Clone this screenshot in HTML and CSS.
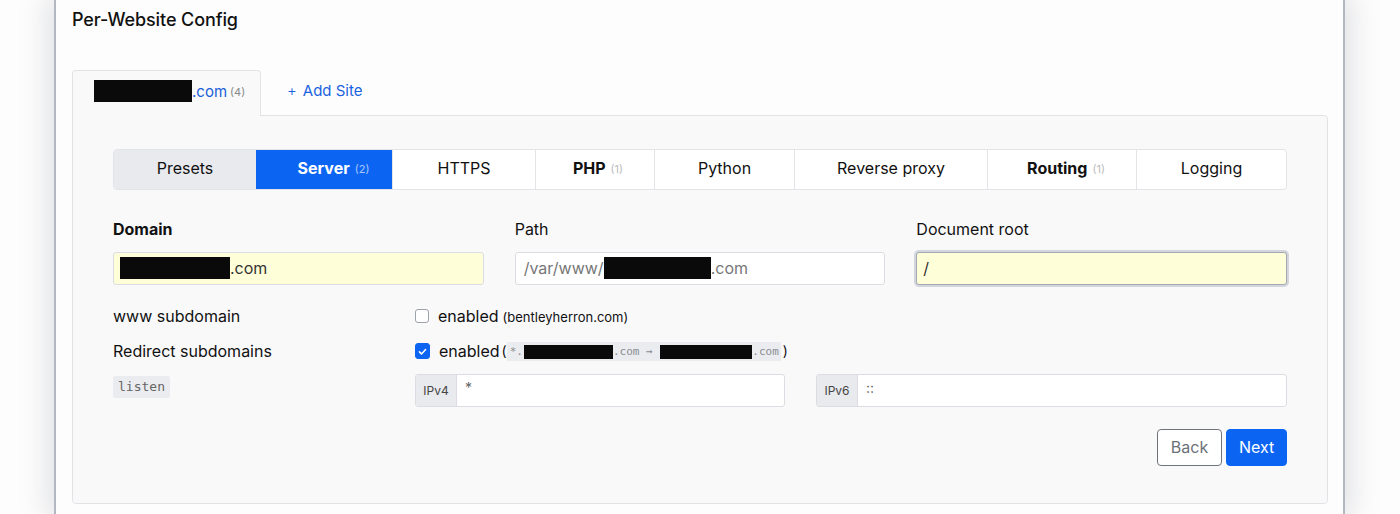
FILE: index.html
```html
<!DOCTYPE html>
<html>
<head>
<meta charset="utf-8">
<link rel="stylesheet" href="styles.css">
</head>
<body>
<div class="window">
  <h1 class="title">Per-Website Config</h1>
  <div class="site-tabs">
    <div class="site-tab active"><span class="redact r-tab"></span><span class="tab-dom">.com</span><span class="tab-count">(4)</span></div>
    <div class="site-tab add"><span class="plus">+</span> Add Site</div>
  </div>
  <div class="panel">
    <div class="seg">
      <div class="seg-item presets w-presets">Presets</div>
      <div class="seg-item current w-server"><b>Server</b><span class="cnt">(2)</span></div>
      <div class="seg-item w-https">HTTPS</div>
      <div class="seg-item w-php"><b>PHP</b><span class="cnt">(1)</span></div>
      <div class="seg-item w-python">Python</div>
      <div class="seg-item w-proxy">Reverse proxy</div>
      <div class="seg-item w-routing"><b>Routing</b><span class="cnt">(1)</span></div>
      <div class="seg-item w-logging">Logging</div>
    </div>

    <div class="fields">
      <div class="field">
        <div class="label bold">Domain</div>
        <div class="input yellow"><span class="redact r-dom"></span>.com</div>
      </div>
      <div class="field">
        <div class="label">Path</div>
        <div class="input muted">/var/www/<span class="redact r-path"></span>.com</div>
      </div>
      <div class="field">
        <div class="label">Document root</div>
        <div class="input yellow focus">/</div>
      </div>
    </div>

    <div class="opts">
      <div class="opt-label">www subdomain</div>
      <div class="opt-val"><span class="check"></span><span class="en">enabled</span><span class="note">(bentleyherron.com)</span></div>

      <div class="opt-label">Redirect subdomains</div>
      <div class="opt-val"><span class="check on"><svg viewBox="0 0 16 16" width="11" height="11"><path d="M3.5 8.5l3 3 6-6.5" fill="none" stroke="#fff" stroke-width="2.2" stroke-linecap="round" stroke-linejoin="round"/></svg></span><span class="en">enabled</span><span class="paren">(</span><code class="redir">*.<span class="redact r-c1"></span>.com → <span class="redact r-c2"></span>.com</code><span class="paren">)</span></div>

      <div class="opt-label listen-cell"><code class="listen">listen</code></div>
      <div class="opt-val ips">
        <div class="igroup v4"><span class="prefix">IPv4</span><span class="ival">*</span></div>
        <div class="igroup v6"><span class="prefix">IPv6</span><span class="ival">::</span></div>
      </div>
    </div>

    <div class="actions">
      <button class="btn back">Back</button>
      <button class="btn next">Next</button>
    </div>
  </div>
</div>
</body>
</html>
```

FILE: styles.css
```css
html, body {
  margin: 0;
  padding: 0;
  background: #fdfdfd;
  overflow: hidden;
  height: 514px;
}
body {
  font-family: Inter, "Open Sans", "Liberation Sans", sans-serif;
  color: #111;
}
.window {
  margin-left: 54px;
  height: 514px;
  box-sizing: content-box;
  border-left: 2px solid #b3b7bf;
  border-right: 2px solid #b3b7bf;
  background: #fdfdfd;
  box-shadow: 0 0 28px 6px rgba(120, 125, 135, 0.22);
  padding: 0 15px 0 16px;
  width: 1256px;
}
.title {
  margin: 0;
  padding-top: 8px;
  font-size: 18px;
  line-height: 24px;
  font-weight: 500;
  letter-spacing: -0.1px;
  color: #111;
}
.site-tabs {
  display: flex;
  margin-top: 38px;
  height: 45px;
  position: relative;
  z-index: 1;
}
.site-tab {
  display: flex;
  align-items: center;
  box-sizing: border-box;
  height: 46px;
  padding: 0 21px 5px 21px;
  font-size: 14px;
}
.site-tab.active {
  width: 189px;
  border: 1px solid #e2e3e7;
  border-bottom: none;
  border-radius: 4px 4px 0 0;
  background: #f9f9fa;
}
.redact {
  display: inline-block;
  background: #0a0a0a;
  vertical-align: middle;
  flex: none;
}
.r-tab { width: 98px; height: 22px; }
.tab-dom { color: #1a5fd8; font-size: 15px; }
.tab-count { color: #888; font-size: 11px; margin-left: 3px; margin-top: 2px; }
.site-tab.add {
  color: #1a63e0;
  font-size: 15px;
  padding-left: 26px;
}
.plus { margin-right: 6px; font-weight: 300; }
.panel {
  border: 1px solid #e2e3e7;
  border-radius: 0 4px 4px 4px;
  background: #f9f9fa;
  padding: 33px 40px 37px 40px;
}
.seg {
  display: flex;
  height: 41px;
  box-sizing: border-box;
  border: 1px solid #e3e4e8;
  border-radius: 4px;
  overflow: hidden;
  background: #fff;
}
.seg-item {
  flex: 0 0 auto;
  box-sizing: border-box;
  display: flex;
  align-items: center;
  justify-content: center;
  padding-bottom: 3px;
  font-size: 16px;
  border-left: 1px solid #e3e4e8;
  white-space: nowrap;
}
.w-presets { width: 142px; border-left: none; }
.w-server { width: 136px; padding-left: 18px; }
.w-https { width: 143px; }
.w-php { width: 119px; padding-left: 6px; }
.w-python { width: 140px; }
.w-proxy { width: 193px; }
.w-routing { width: 149px; padding-left: 8px; }
.w-logging { flex: 1 1 auto; }
.seg-item b { font-weight: 700; }
.seg-item .cnt {
  font-size: 11px;
  color: #bbb;
  margin-left: 5px;
  margin-top: 2px;
}
.seg-item.presets { background: #e9eaee; }
.seg-item.current {
  background: #0b65f2;
  color: #fff;
  border-left-color: #0b65f2;
}
.seg-item.current .cnt { color: rgba(255,255,255,0.65); }
.fields {
  display: grid;
  grid-template-columns: 1fr 1fr 1fr;
  column-gap: 31px;
  margin-top: 29px;
}
.label {
  font-size: 16px;
  line-height: 20px;
  margin-bottom: 13px;
}
.label.bold { font-weight: 700; }
.input {
  height: 33px;
  box-sizing: border-box;
  border: 1px solid #dcdde2;
  border-radius: 3px;
  background: #fff;
  display: flex;
  align-items: center;
  padding: 0 7px 1px 6px;
  font-size: 16px;
  color: #333;
}
.input.yellow { background: #fefed9; }
.input.muted { color: #777; padding-left: 8px; }
.input.focus {
  border-color: #a3a8b2;
  box-shadow: 0 0 0 2px #d3d6dc;
}
.r-dom { width: 110px; height: 22px; }
.r-path { width: 107px; height: 22px; }
.opts {
  display: grid;
  grid-template-columns: 302px 1fr;
  margin-top: 19px;
  row-gap: 11px;
}
.opt-label {
  font-size: 16px;
  line-height: 24px;
  display: flex;
  align-items: center;
}
.opt-val {
  display: flex;
  align-items: center;
  font-size: 16px;
  line-height: 24px;
  height: 24px;
}
.check {
  width: 14px;
  height: 14px;
  box-sizing: border-box;
  border: 1px solid #9ea3ab;
  border-radius: 3px;
  background: #fff;
  margin-right: 9px;
  display: inline-flex;
  align-items: center;
  justify-content: center;
}
.check.on {
  background: #0b65f2;
  border-color: #0b65f2;
  width: 15px;
  height: 16px;
}
.en { color: #111; }
.note { font-size: 13px; margin-left: 4px; margin-top: 2px; }
.paren { font-size: 14px; margin-left: 2px; }
code {
  font-family: "DejaVu Sans Mono", "Liberation Mono", monospace;
}
.redir {
  display: inline-flex;
  align-items: center;
  background: #ebecef;
  color: #8a8d93;
  font-size: 11px;
  padding: 0 2px 0 3px;
  height: 19px;
  margin-top: 1px;
  white-space: pre;
}
.r-c1 { width: 89px; height: 14px; margin: 0 0 0 1px; }
.r-c2 { width: 92px; height: 14px; margin: 0 0 0 1px; }
.listen-cell { align-items: flex-start; height: 33px; padding-top: 2px; box-sizing: border-box; }
.listen {
  background: #ebecef;
  color: #666;
  font-size: 13px;
  line-height: 22px;
  padding: 0 5px;
  border-radius: 2px;
}
.opt-val.ips {
  display: grid;
  grid-template-columns: 370px 1fr;
  column-gap: 31px;
  height: 33px;
}
.igroup {
  display: flex;
  height: 33px;
  box-sizing: border-box;
  border: 1px solid #dcdde2;
  border-radius: 3px;
  background: #fff;
  overflow: hidden;
}
.prefix {
  width: 41px;
  box-sizing: border-box;
  background: #e9eaee;
  border-right: 1px solid #dcdde2;
  font-size: 12px;
  color: #444;
  display: flex;
  align-items: center;
  justify-content: center;
}
.ival {
  padding: 0 8px;
  font-size: 14px;
  color: #666;
  display: flex;
  align-items: center;
  margin-top: -6px;
}
.actions {
  display: flex;
  justify-content: flex-end;
  gap: 4px;
  margin-top: 22px;
}
.btn {
  font-family: inherit;
  font-size: 16px;
  height: 37px;
  border-radius: 4px;
  padding: 0 12px 2px;
  cursor: pointer;
}
.btn.back {
  width: 65px;
  background: #fff;
  border: 1px solid #6f747c;
  color: #6c7078;
}
.btn.next {
  width: 61px;
  background: #0b65f2;
  border: 1px solid #0b65f2;
  color: #fff;
}
```
